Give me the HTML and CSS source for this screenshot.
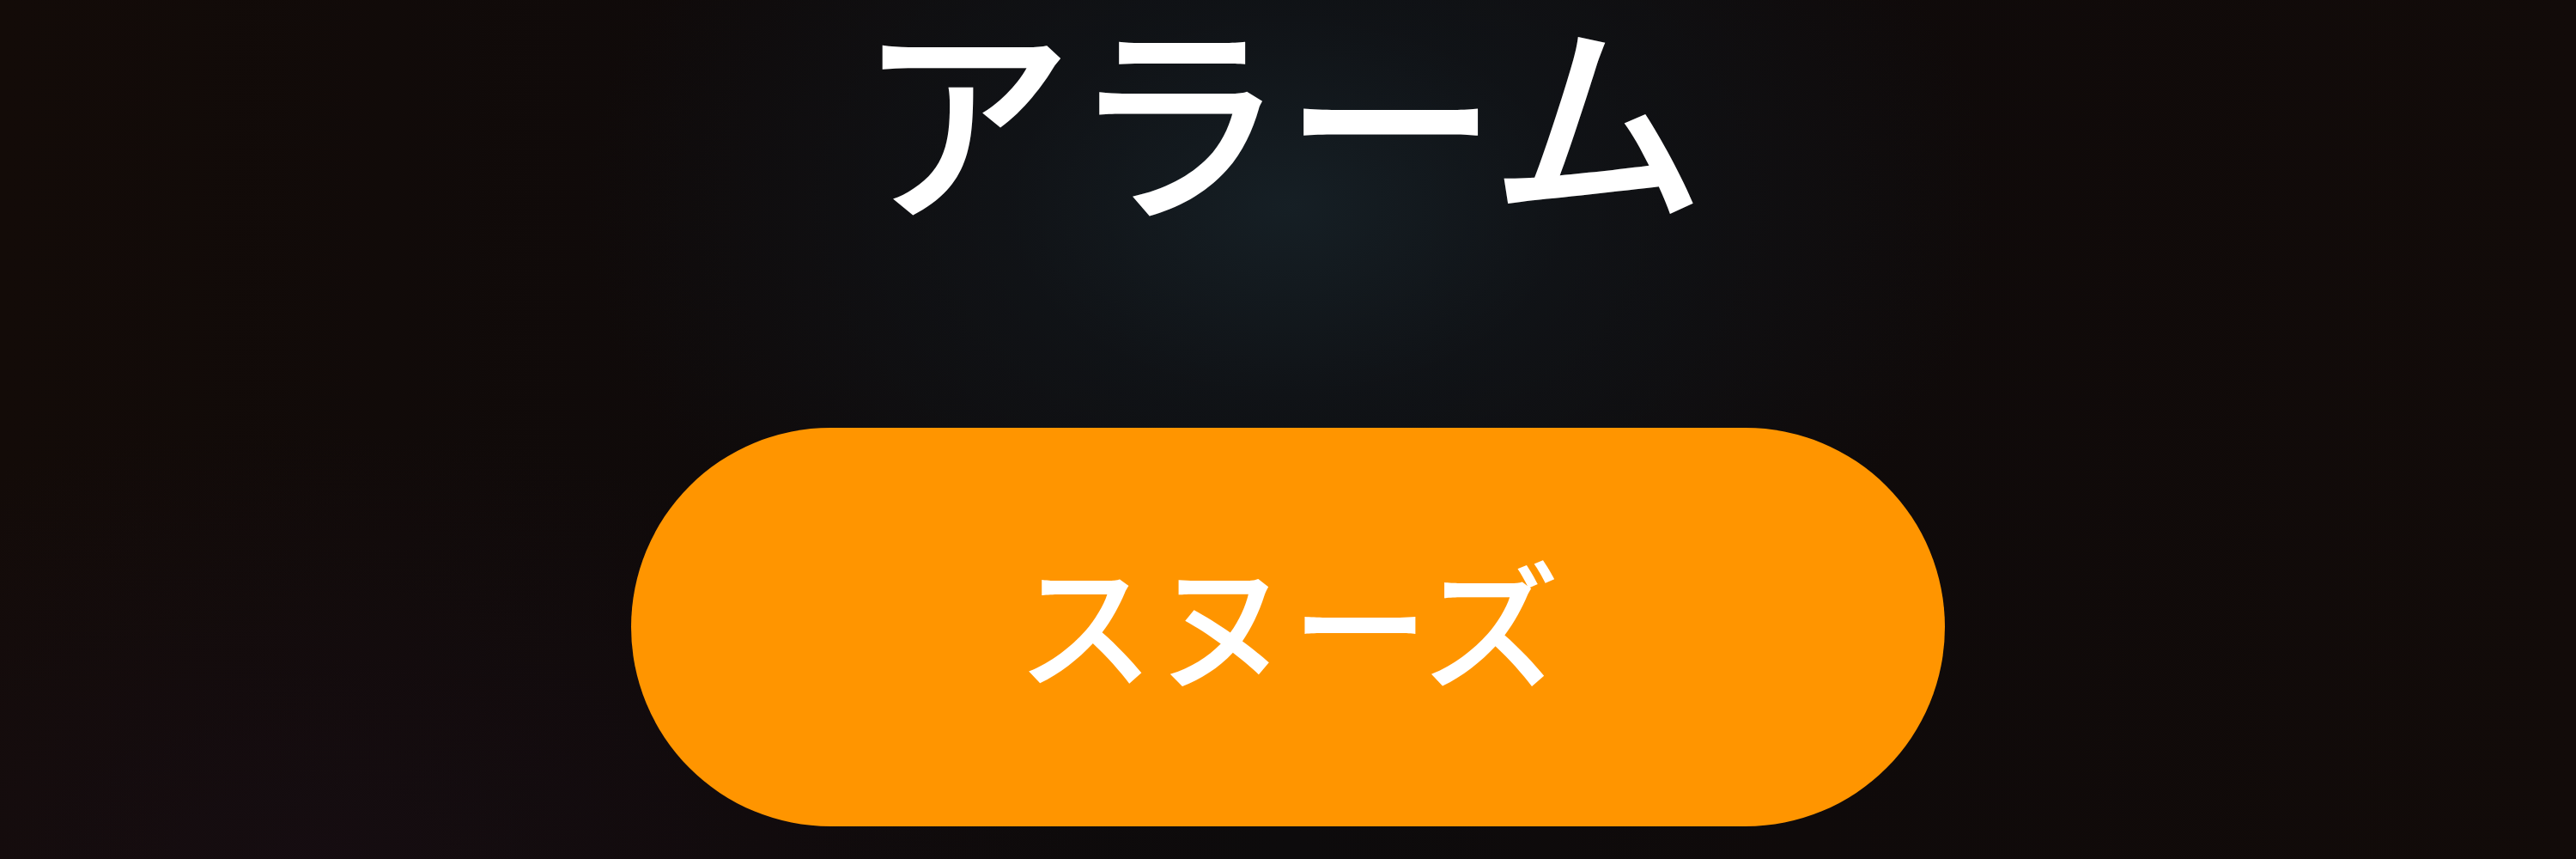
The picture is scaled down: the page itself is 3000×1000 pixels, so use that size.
FILE: index.html
```html
<!DOCTYPE html>
<html lang="ja">
<head>
<meta charset="utf-8">
<title>アラーム</title>
<link rel="stylesheet" href="styles.css">
</head>
<body>
<main class="screen">
  <h1 class="title">アラーム</h1>
  <button class="snooze" type="button"><span class="snooze-label">スヌーズ</span></button>
</main>
</body>
</html>
```
FILE: styles.css
```css
html, body {
  margin: 0;
  padding: 0;
  width: 3000px;
  height: 1000px;
  overflow: hidden;
}

body {
  background:
    radial-gradient(ellipse 820px 560px at 50% 24%, rgba(22, 32, 38, 0.95) 0%, rgba(17, 22, 27, 0.7) 40%, rgba(14, 12, 14, 0) 100%),
    radial-gradient(ellipse 900px 500px at 12% 100%, rgba(24, 14, 22, 0.6) 0%, rgba(18, 12, 16, 0) 100%),
    linear-gradient(90deg, #130b08 0%, #0f0a0a 30%, #0d0b0c 50%, #0f0a0a 70%, #120b09 100%);
  font-family: "Noto Sans CJK JP", "Noto Sans", sans-serif;
  color: #ffffff;
}

.screen {
  display: flex;
  flex-direction: column;
  align-items: center;
  padding-top: 4px;
}

.title {
  margin: 0 20px 0 0;
  font-size: 252px;
  font-weight: 500;
  line-height: 252px;
  letter-spacing: -4px;
  color: #ffffff;
}

.snooze {
  margin-top: 242px;
  width: 1530px;
  height: 464px;
  border: none;
  border-radius: 232px;
  background: #ff9500;
  color: #ffffff;
  font-family: "Noto Sans CJK JP", "Noto Sans", sans-serif;
  font-size: 160px;
  font-weight: 500;
  display: flex;
  align-items: center;
  justify-content: center;
  padding: 0;
}

.snooze-label {
  display: block;
  line-height: 160px;
  margin-top: -20px;
  margin-left: 0;
}
```
